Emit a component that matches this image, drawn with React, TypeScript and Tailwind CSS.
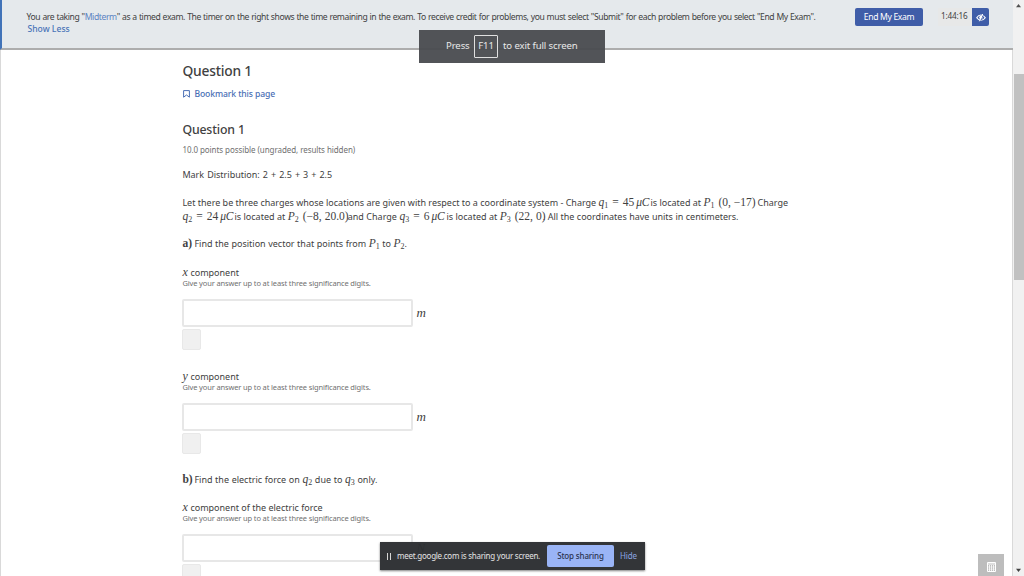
import { ReactNode } from "react";

interface MathProps {
  children: ReactNode;
  className?: string;
}

function Tex({ children, className = "" }: MathProps) {
  return (
    <span
      className={`inline-block whitespace-nowrap font-['Liberation_Serif',serif] text-[11.5px] leading-[14px] tracking-normal ${className}`}
    >
      {children}
    </span>
  );
}

interface SymbolProps {
  name: string;
  index: number;
}

function Symbol({ name, index }: SymbolProps) {
  return (
    <>
      <i>{name}</i>
      <span className="relative top-[2px] text-[8px]">{index}</span>
    </>
  );
}

interface ChargeProps {
  index: number;
  value: number;
  className: string;
}

function Charge({ index, value, className }: ChargeProps) {
  return (
    <Tex className={className}>
      <Symbol name="q" index={index} />
      <span className="mx-[4px]">=</span>
      {value}
      <i className="ml-[2px] tracking-[-0.2px]">μC</i>
    </Tex>
  );
}

interface PointProps {
  index: number;
  coords: string;
  className: string;
}

function Point({ index, coords, className }: PointProps) {
  return (
    <Tex className={className}>
      <Symbol name="P" index={index} />
      <span className="ml-[4px]">{coords}</span>
    </Tex>
  );
}

interface AnswerFieldProps {
  label: ReactNode;
  variable: string;
  unit: string;
}

function AnswerField({ label, variable, unit }: AnswerFieldProps) {
  return (
    <div>
      <p className="h-[13px] whitespace-nowrap leading-[13px]">
        <Tex className="w-[8px] text-[12px] italic leading-[12px]">{variable}</Tex>
        {label}
      </p>
      <p className="h-[11px] whitespace-nowrap text-[7.5px] leading-[10px] tracking-[-0.14px] text-[#707070]">
        Give your answer up to at least three significance digits.
      </p>
      <div className="mt-[10px] flex h-[28px] items-center">
        <input
          type="text"
          className="h-[28px] w-[231px] rounded-[2px] border-2 border-[#e7e7e7] bg-white outline-none"
        />
        <Tex className="ml-[3px] text-[13px] italic">{unit}</Tex>
      </div>
      <div className="mt-[2px] h-[21px] w-[19px] rounded-[2px] border border-[#e8e8e8] bg-[#f0f0f0]" />
    </div>
  );
}

function EyeSlashIcon() {
  return (
    <svg width="10" height="9" viewBox="0 0 20 18" fill="none" stroke="currentColor">
      <path d="M1.5 9.5C4 5.5 7 4 10 4S16 5.5 18.5 9.5C16 13 13 14.5 10 14.5S4 13 1.5 9.5Z" strokeWidth="2.4" />
      <circle cx="10" cy="9" r="3.6" fill="currentColor" stroke="none" />
      <path d="M15 3L9.5 15" stroke="#3f5da8" strokeWidth="1.6" />
      <path d="M13.4 2L6.8 16.5" strokeWidth="2" />
    </svg>
  );
}

function ExamHeader() {
  return (
    <header className="flex h-[50px] w-[1013px] border-b-2 border-l-2 border-b-[#adadad] border-l-[#4173b8] bg-[#e5e9ec]">
      <div className="w-[853px] pl-[24.5px] pt-[11px] text-[8.6px] leading-[12px]">
        <p className="whitespace-nowrap tracking-[-0.4px] [word-spacing:0.36px]">
          You are taking "<span className="text-[#5b83c2]">Midterm</span>" as a timed exam. The timer
          on the right shows the time remaining in the exam. To receive credit for problems, you must
          select "Submit" for each problem before you select "End My Exam".
        </p>
        <button className="ml-[1px] block font-medium text-[#4a74b8]">Show Less</button>
      </div>
      <div className="flex pt-[8px]">
        <button className="h-[18px] w-[68px] rounded-[2px] bg-[#3f5da8] text-[8.6px] tracking-[-0.35px] text-white">
          End My Exam
        </button>
        <div className="ml-[15px] flex h-[18px]">
          <span className="w-[34px] bg-[#e7e8e8] pl-[3px] text-[8.2px] leading-[16px] tracking-[-0.2px]">
            1:44:16
          </span>
          <button className="flex h-[18px] w-[17px] items-center justify-center rounded-r-[2px] bg-[#3f5da8] text-white">
            <EyeSlashIcon />
          </button>
        </div>
      </div>
    </header>
  );
}

function Scrollbar() {
  return (
    <aside className="flex w-[11px] flex-col items-center bg-[#f1f1f1]">
      <svg className="mt-[3px] h-[5px] w-[5px]" viewBox="0 0 5 5">
        <path d="M0 4.2L2.5 1L5 4.2Z" fill="#505050" />
      </svg>
      <div className="mt-[66px] h-[206px] w-[10px] self-end bg-[#c1c1c1]" />
      <svg className="mb-[3px] mt-auto h-[5px] w-[5px]" viewBox="0 0 5 5">
        <path d="M0 0.8L2.5 4L5 0.8Z" fill="#404040" />
      </svg>
    </aside>
  );
}

export default function App() {
  return (
    <div className="relative flex h-[576px] w-[1024px] overflow-hidden bg-white font-['Noto_Sans',sans-serif] text-[9px] text-[#414141]">
      <div className="h-[576px] w-[1013px]">
        <ExamHeader />
        <main className="h-[526px] overflow-hidden border-l border-r border-[#d9d9d9] pl-[181.4px] pt-[12px]">
          <h1 className="h-[18px] text-[13.8px] font-medium leading-[17px] tracking-[-0.2px]">
            Question 1
          </h1>
          <div className="mt-[7px] flex h-[14px] items-center text-[8.6px] font-medium tracking-[-0.1px] text-[#4a6fb5]">
            <svg className="mr-[4px] ml-[1px]" width="7" height="8" viewBox="0 0 7 8" fill="none" stroke="currentColor">
              <path d="M0.6 0.6H6.4V7.2L3.5 5L0.6 7.2Z" strokeWidth="1" />
            </svg>
            Bookmark this page
          </div>

          <h2 className="mt-[20px] h-[16px] text-[12.3px] font-medium leading-[17px] tracking-[-0.15px]">
            Question 1
          </h2>
          <p className="mt-[7px] h-[12px] text-[8px] leading-[12px] tracking-[-0.07px] text-[#707070]">
            10.0 points possible (ungraded, results hidden)
          </p>
          <p className="mt-[12px] h-[14px] leading-[14px] [word-spacing:0.7px]">
            Mark Distribution: 2 + 2.5 + 3 + 2.5
          </p>

          <div className="mt-[13px] whitespace-nowrap leading-[14px]">
            <p className="h-[14px]">
              Let there be three charges whose locations are given with respect to a coordinate system -
              Charge{" "}
              <Charge index={1} value={45} className="w-[52px]" />
              is located at{" "}
              <Point index={1} coords="(0, −17)" className="w-[54px]" />
              Charge
            </p>
            <p className="h-[14px] [word-spacing:0.13px]">
              <Charge index={2} value={24} className="w-[52px]" />
              is located at{" "}
              <Point index={2} coords="(−8, 20.0)" className="w-[60px]" />
              and Charge{" "}
              <Charge index={3} value={6} className="w-[47px]" />
              is located at{" "}
              <Point index={3} coords="(22, 0)" className="w-[43px]" />
              . All the coordinates have units in centimeters.
            </p>
          </div>

          <p className="mt-[13px] h-[15px] whitespace-nowrap leading-[14px] [word-spacing:0.2px]">
            <Tex className="w-[12px] font-bold">a)</Tex>Find the position vector that points from{" "}
            <Tex className="w-[11px]">
              <Symbol name="P" index={1} />
            </Tex>{" "}
            to{" "}
            <Tex>
              <Symbol name="P" index={2} />
            </Tex>
            .
          </p>

          <div className="mt-[14px]">
            <AnswerField variable="x" label="component" unit="m" />
          </div>
          <div className="mt-[19px]">
            <AnswerField variable="y" label="component" unit="m" />
          </div>

          <p className="mt-[18px] h-[14px] whitespace-nowrap leading-[14px] [word-spacing:0.3px]">
            <Tex className="w-[12px] font-bold">b)</Tex>Find the electric force on{" "}
            <Tex>
              <Symbol name="q" index={2} />
            </Tex>{" "}
            due to{" "}
            <Tex>
              <Symbol name="q" index={3} />
            </Tex>{" "}
            only.
          </p>
          <div className="mt-[14px]">
            <AnswerField variable="x" label="component of the electric force" unit="N" />
          </div>
        </main>
      </div>
      <Scrollbar />

      {/* Full screen hint */}
      <div className="absolute left-[419px] top-[30px] flex h-[33px] w-[186px] items-center whitespace-nowrap bg-[#494b4f]/95 pl-[27px] text-[9.6px] tracking-[-0.12px] text-[#e8e8e8]">
        <span className="w-[23px]">Press</span>
        <span className="ml-[5px] mr-[5px] flex h-[23px] w-[24px] items-center justify-center rounded-[1px] border border-[#e0e0e0]">
          F11
        </span>
        to exit full screen
      </div>

      {/* Screen sharing bar */}
      <div className="absolute left-[380px] top-[542px] flex h-[28px] w-[265px] items-center bg-[#2c2e32]/97 text-[8px] text-[#e4e4e4] shadow-[0_1px_2px_rgba(0,0,0,0.5)]">
        <span className="ml-[7px] h-[7px] w-[4px] border-x border-[#d5d5d5]" />
        <span className="ml-[6px] w-[150px] whitespace-nowrap tracking-[-0.25px]">
          meet.google.com is sharing your screen.
        </span>
        <button className="h-[22px] w-[67px] rounded-[2px] bg-[#9ab4f6] font-medium tracking-[-0.15px] text-[#2b3350]">
          Stop sharing
        </button>
        <button className="ml-[6px] tracking-[-0.1px] text-[#8ba4e0]">Hide</button>
      </div>

      {/* Calculator toggle */}
      <button className="absolute left-[978px] top-[554px] flex h-[22px] w-[26px] items-center justify-center bg-[#bdbdbd] pt-[3px]">
        <svg width="9" height="10" viewBox="0 0 9 10" fill="none" stroke="#fff">
          <path d="M0.5 0.5H8.5V9.5H0.5Z M0.5 2H8.5" />
          <path d="M2.5 3V9 M4.5 3V9 M6.5 3V9" strokeWidth="0.8" />
          <path d="M1 5H8 M1 7.2H8" strokeWidth="0.5" />
        </svg>
      </button>
    </div>
  );
}
